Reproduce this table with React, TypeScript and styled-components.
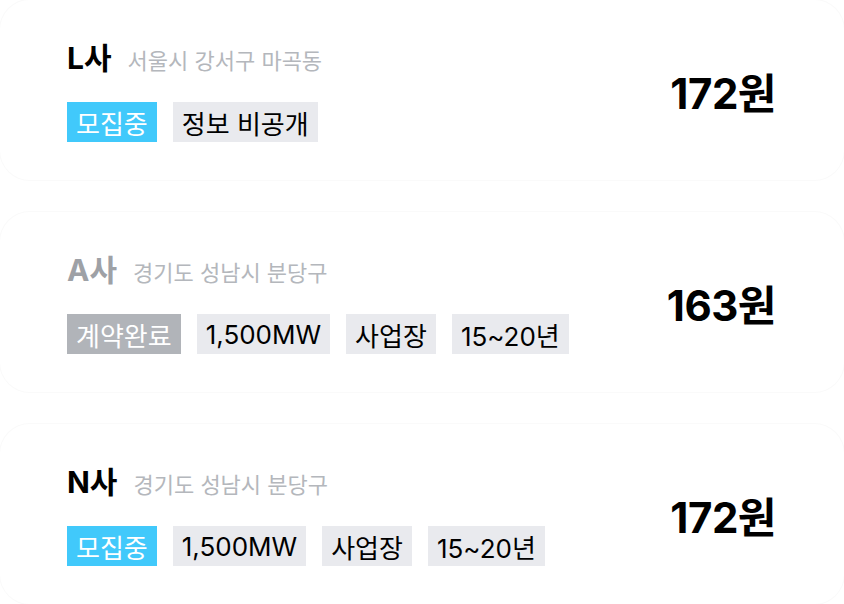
import React from 'react'
import styled, { createGlobalStyle } from 'styled-components'

type Status = 'open' | 'done'

interface Offer {
  company: string
  address: string
  status: Status
  tags: string[]
  price: string
}

const offers: Offer[] = [
  { company: 'L사', address: '서울시 강서구 마곡동', status: 'open', tags: ['정보 비공개'], price: '172원' },
  { company: 'A사', address: '경기도 성남시 분당구', status: 'done', tags: ['1,500MW', '사업장', '15~20년'], price: '163원' },
  { company: 'N사', address: '경기도 성남시 분당구', status: 'open', tags: ['1,500MW', '사업장', '15~20년'], price: '172원' },
]

const GlobalStyle = createGlobalStyle`
  html, body {
    margin: 0;
    padding: 0;
    background: #ffffff;
  }
  body {
    font-family: Inter, 'Noto Sans CJK KR', sans-serif;
    color: #000;
  }
`

export default function App() {
  return (
    <>
      <GlobalStyle />
      <List>
        {offers.map(offer => (
          <Card key={offer.company}>
            <Info>
              <TitleRow>
                <Company $muted={offer.status === 'done'}>{offer.company}</Company>
                <Address>{offer.address}</Address>
              </TitleRow>
              <TagRow>
                <StatusTag $status={offer.status}>
                  {offer.status === 'open' ? '모집중' : '계약완료'}
                </StatusTag>
                {offer.tags.map(tag => (
                  <Tag key={tag}>{tag}</Tag>
                ))}
              </TagRow>
            </Info>
            <Price>{offer.price}</Price>
          </Card>
        ))}
      </List>
    </>
  )
}

const List = styled.div`
  display: flex;
  flex-direction: column;
  gap: 32px;
  width: 844px;
`

const Card = styled.div`
  box-sizing: border-box;
  height: 180px;
  display: flex;
  align-items: center;
  justify-content: space-between;
  padding: 0 68px 0 67px;
  border-radius: 30px;
  box-shadow: 0 0 0 1px #fafafa;
  background: #fff;
`

const Info = styled.div`
  display: flex;
  flex-direction: column;
  gap: 24px;
`

const TitleRow = styled.div`
  display: flex;
  align-items: baseline;
  gap: 16px;
  height: 40px;
`

const Company = styled.span<{ $muted?: boolean }>`
  font-size: 30px;
  font-weight: 700;
  line-height: 40px;
  color: ${p => (p.$muted ? '#9ea1a6' : '#000')};
`

const Address = styled.span`
  font-size: 22px;
  line-height: 40px;
  color: #b4b7bc;
`

const TagRow = styled.div`
  display: flex;
  gap: 16px;
`

const Tag = styled.span`
  display: inline-flex;
  align-items: center;
  height: 40px;
  padding: 0 9px;
  font-size: 26px;
  background: #e9eaee;
  color: #000;
`

const StatusTag = styled(Tag)<{ $status: Status }>`
  background: ${p => (p.$status === 'open' ? '#41c9fb' : '#b1b4b9')};
  color: #fff;
`

const Price = styled.div`
  font-size: 42px;
  font-weight: 700;
  letter-spacing: -0.5px;
  color: #000;
`
